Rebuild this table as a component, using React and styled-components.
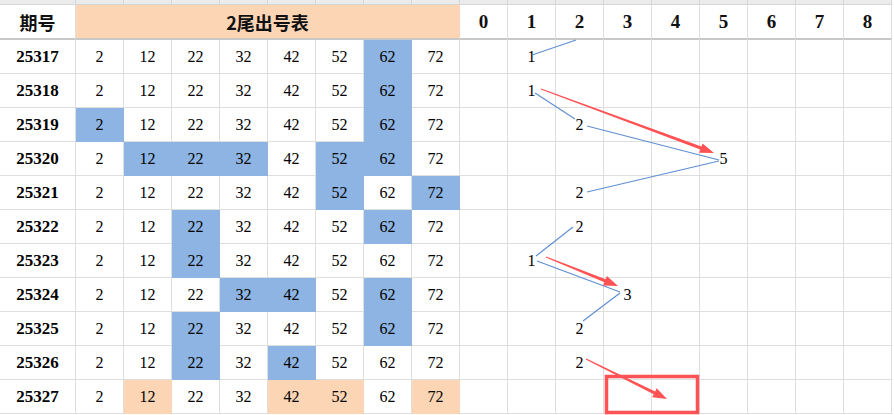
import React from 'react';
import styled, { createGlobalStyle } from 'styled-components';

const GlobalStyle = createGlobalStyle`
  html, body {
    margin: 0;
    padding: 0;
    background: #ffffff;
  }
  body {
    font-family: "Liberation Serif", serif;
    overflow: hidden;
  }
`;

const GRID = '#dedede';
const BLUE = '#8db4e2';
const PEACH = '#fcd5b4';

const Wrapper = styled.div`
  position: relative;
  width: 894px;
  height: 415px;
  overflow: hidden;
`;

const Sheet = styled.div`
  display: grid;
  grid-template-columns: 76px repeat(17, 48px);
`;

const StripCell = styled.div`
  height: 4px;
  background: #ebebeb;
  border-right: 1px solid #d6d6d6;
  border-bottom: 1px solid #d6d6d6;
`;

const HeadCell = styled.div`
  height: 33px;
  display: flex;
  align-items: center;
  justify-content: center;
  background: ${({ $fill }) => $fill || '#ffffff'};
  border-right: 1px solid ${({ $fill }) => $fill || GRID};
  border-bottom: 2px solid #c8c8c8;
  grid-column: ${({ $span }) => ($span ? `span ${$span}` : 'auto')};
  font-family: "Noto Sans CJK SC", sans-serif;
  font-weight: 700;
  font-size: 18px;
  color: #111;
`;

const DigitHead = styled(HeadCell)`
  font-family: "Liberation Serif", serif;
  font-size: 19px;
`;

const Cell = styled.div`
  height: 33px;
  display: flex;
  align-items: center;
  justify-content: center;
  background: ${({ $fill }) => $fill || '#ffffff'};
  border-right: 1px solid ${({ $fill }) => $fill || GRID};
  border-bottom: 1px solid ${({ $fill }) => $fill || GRID};
  font-family: "Liberation Serif", serif;
  font-size: 16px;
  color: #000;
`;

const LabelCell = styled(Cell)`
  font-weight: 700;
  font-size: 17px;
`;

const Overlay = styled.svg`
  position: absolute;
  left: 0;
  top: 0;
  pointer-events: none;
`;

const values = [2, 12, 22, 32, 42, 52, 62, 72];

const rows = [
  { id: '25317', blue: [6], pick: 1 },
  { id: '25318', blue: [6], pick: 1 },
  { id: '25319', blue: [0, 6], pick: 2 },
  { id: '25320', blue: [1, 2, 3, 5, 6], pick: 5 },
  { id: '25321', blue: [5, 7], pick: 2 },
  { id: '25322', blue: [2, 6], pick: 2 },
  { id: '25323', blue: [2], pick: 1 },
  { id: '25324', blue: [3, 4, 6], pick: 3 },
  { id: '25325', blue: [2, 6], pick: 2 },
  { id: '25326', blue: [2, 4], pick: 2 },
  { id: '25327', peach: [1, 4, 5, 7], pick: null },
];

const blueLines = [
  [532, 55, 576, 40],
  [535, 93, 575, 119],
  [587, 126, 719, 160],
  [587, 192, 719, 161],
  [573, 227, 536, 256],
  [537, 261, 620, 292],
  [620, 293, 583, 321],
];

const arrows = [
  [541, 89, 714, 153],
  [546, 257, 618, 286],
  [586, 359, 667, 399],
];

function arrowShape([x1, y1, x2, y2]) {
  const dx = x2 - x1;
  const dy = y2 - y1;
  const len = Math.hypot(dx, dy);
  const ux = dx / len;
  const uy = dy / len;
  const px = -uy;
  const py = ux;
  const head = 14;
  const bx = x2 - ux * head;
  const by = y2 - uy * head;
  const w0 = 0.6;
  const w1 = 1.6;
  const hw = 5;
  const pts = [
    [x1 + px * w0, y1 + py * w0],
    [bx + px * w1, by + py * w1],
    [bx + px * hw, by + py * hw],
    [x2, y2],
    [bx - px * hw, by - py * hw],
    [bx - px * w1, by - py * w1],
    [x1 - px * w0, y1 - py * w0],
  ];
  return pts.map((p) => p.map((v) => v.toFixed(1)).join(',')).join(' ');
}

export default function App() {
  return (
    <Wrapper>
      <GlobalStyle />
      <Sheet>
        {Array.from({ length: 18 }).map((_, i) => (
          <StripCell key={`s${i}`} />
        ))}

        <HeadCell>期号</HeadCell>
        <HeadCell $span={8} $fill={PEACH}>2尾出号表</HeadCell>
        {Array.from({ length: 9 }).map((_, i) => (
          <DigitHead key={`h${i}`}>{i}</DigitHead>
        ))}

        {rows.map((r) => (
          <React.Fragment key={r.id}>
            <LabelCell>{r.id}</LabelCell>
            {values.map((v, i) => {
              let fill;
              if (r.blue && r.blue.includes(i)) fill = BLUE;
              if (r.peach && r.peach.includes(i)) fill = PEACH;
              return (
                <Cell key={v} $fill={fill}>
                  {v}
                </Cell>
              );
            })}
            {Array.from({ length: 9 }).map((_, d) => (
              <Cell key={`d${d}`}>{r.pick === d ? d : ''}</Cell>
            ))}
          </React.Fragment>
        ))}
      </Sheet>

      <Overlay width="894" height="415" viewBox="0 0 894 415">
        {blueLines.map(([x1, y1, x2, y2], i) => (
          <line
            key={i}
            x1={x1}
            y1={y1}
            x2={x2}
            y2={y2}
            stroke="#5f8fd1"
            strokeWidth="1.2"
          />
        ))}
        {arrows.map((a, i) => (
          <polygon key={i} points={arrowShape(a)} fill="#ff5254" />
        ))}
        <rect
          x="606.5"
          y="376.5"
          width="91"
          height="36"
          fill="none"
          stroke="#ff5254"
          strokeWidth="3.5"
        />
      </Overlay>
    </Wrapper>
  );
}
